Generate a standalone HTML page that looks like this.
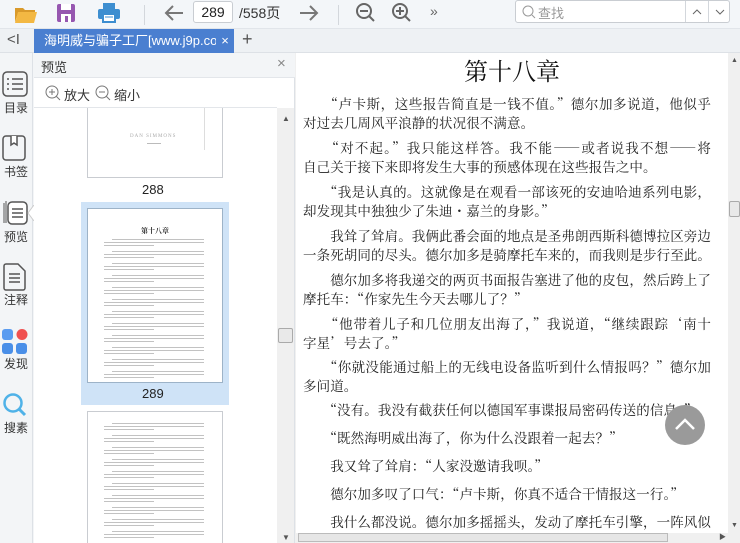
<!DOCTYPE html>
<html><head><meta charset="utf-8"><style>
*{margin:0;padding:0;box-sizing:border-box}
body{width:740px;height:543px;overflow:hidden;background:#f3f5f7;font-family:"Liberation Sans","Noto Sans CJK SC",sans-serif;position:relative;color:#333}
.a{position:absolute}
.tb{left:0;top:0;width:740px;height:29px;background:#f3f6f9;border-bottom:1px solid #e1e5ea}
.tabbar{left:0;top:29px;width:740px;height:24px;background:#eef1f4;border-bottom:1px solid #dde1e6}
.tab{left:34px;top:29px;width:200px;height:24px;background:#4a7fd0;color:#fff;font-size:13px;line-height:24px;padding-left:10px;white-space:nowrap;overflow:hidden}
.rail{left:0;top:53px;width:33px;height:490px;background:#f3f5f7;border-right:1px solid #dde1e6}
.rl{font-size:12px;color:#333;left:1px;width:30px;text-align:center}
.pv{left:34px;top:53px;width:261px;height:490px;background:#fff;border-right:1px solid #dde1e6}
.main{left:296px;top:53px;width:432px;height:480px;background:#fff}
.p{position:absolute;left:303px;width:408px;font-family:"Noto Serif CJK SC","Liberation Serif",serif;font-size:13.5px;letter-spacing:0.1px;line-height:19px;color:#222;font-feature-settings:"fwid" 1}
.p div{text-align:justify;text-align-last:justify;white-space:nowrap}
.p div.l{text-align-last:left}
.thumb{background:#fff;border:1px solid #c9ccd1}
.bar{position:absolute;height:1px;background:#9a9a9a}
</style></head><body>
<div class="a tb"></div>
<svg class="a" style="left:14px;top:4px" width="24" height="20"><path d="M1 4h8l2 2h10v3H4L1 18z" fill="#d99a2b"/><path d="M4 8h19l-3 11H1z" fill="#f3b843"/></svg>
<svg class="a" style="left:56px;top:3px" width="20" height="20"><rect x="1" y="1" width="18" height="18" rx="2" fill="#9657b0"/><rect x="5" y="1" width="10" height="6" fill="#fff"/><rect x="5" y="11" width="10" height="8" fill="#fff"/><rect x="9" y="13" width="3" height="6" fill="#9657b0"/></svg>
<svg class="a" style="left:97px;top:2px" width="24" height="22"><rect x="6" y="1" width="12" height="6" fill="#3d8ed0"/><rect x="1" y="7" width="22" height="10" rx="2" fill="#3d8ed0"/><rect x="6" y="12" width="12" height="8" fill="#fff" stroke="#3d8ed0" stroke-width="2"/><line x1="8" y1="15" x2="16" y2="15" stroke="#3d8ed0"/></svg>
<div class="a" style="left:144px;top:5px;width:1px;height:20px;background:#d3d7dc"></div>
<svg class="a" style="left:163px;top:3px" width="22" height="20"><path d="M20 10H3M10 3L3 10l7 7" stroke="#777" stroke-width="2" fill="none"/></svg>
<div class="a" style="left:193px;top:1px;width:40px;height:22px;border:1px solid #c9cdd2;border-radius:3px;background:#fff;font-size:14px;line-height:20px;text-align:center;color:#222">289</div>
<div class="a" style="left:239px;top:3px;font-size:14px;color:#333">/558页</div>
<svg class="a" style="left:298px;top:3px" width="22" height="20"><path d="M2 10h17M12 3l7 7-7 7" stroke="#777" stroke-width="2" fill="none"/></svg>
<div class="a" style="left:338px;top:5px;width:1px;height:20px;background:#d3d7dc"></div>
<svg class="a" style="left:355px;top:2px" width="22" height="22"><circle cx="9" cy="9" r="7" stroke="#666" stroke-width="2" fill="none"/><path d="M5 9h8M14 14l5 5" stroke="#666" stroke-width="2"/></svg>
<svg class="a" style="left:391px;top:2px" width="22" height="22"><circle cx="9" cy="9" r="7" stroke="#666" stroke-width="2" fill="none"/><path d="M5 9h8M9 5v8M14 14l5 5" stroke="#666" stroke-width="2"/></svg>
<div class="a" style="left:430px;top:3px;font-size:14px;color:#666">»</div>
<div class="a" style="left:515px;top:0px;width:215px;height:23px;border:1px solid #c9cdd2;border-radius:3px;background:#fff"></div>
<svg class="a" style="left:521px;top:4px" width="16" height="16"><circle cx="7" cy="7" r="5" stroke="#999" fill="none"/><path d="M11 11l3 3" stroke="#999"/></svg>
<div class="a" style="left:538px;top:3px;font-size:13px;color:#999">查找</div>
<div class="a" style="left:685px;top:1px;width:1px;height:21px;background:#d3d7dc"></div>
<div class="a" style="left:708px;top:1px;width:1px;height:21px;background:#d3d7dc"></div>
<svg class="a" style="left:691px;top:8px" width="12" height="8"><path d="M2 6l4-4 4 4" stroke="#666" fill="none"/></svg>
<svg class="a" style="left:714px;top:8px" width="12" height="8"><path d="M2 2l4 4 4-4" stroke="#666" fill="none"/></svg>

<div class="a tabbar"></div>
<div class="a" style="left:7px;top:31px;font-size:15px;color:#555">&lt;I</div>
<div class="a tab">海明威与骗子工厂[www.j9p.cor<span style="position:absolute;right:0;top:0;width:18px;background:#4a7fd0;text-align:center">×</span></div>
<div class="a" style="left:242px;top:29px;font-size:18px;color:#555">+</div>

<div class="a rail"></div>
<svg class="a" style="left:2px;top:71px" width="26" height="27"><rect x="1" y="1" width="24" height="24" rx="4" stroke="#555" stroke-width="1.5" fill="none"/><path d="M5 8h2M10 8h11M5 13h2M10 13h11M5 18h2M10 18h11" stroke="#555" stroke-width="1.5"/></svg>
<div class="a rl" style="top:99px">目录</div>
<svg class="a" style="left:2px;top:135px" width="26" height="27"><rect x="1" y="1" width="22" height="24" rx="3" stroke="#555" stroke-width="1.5" fill="none"/><path d="M9 1v9l3-2 3 2V1" stroke="#555" stroke-width="1.5" fill="#fff"/></svg>
<div class="a rl" style="top:163px">书签</div>
<svg class="a" style="left:2px;top:199px" width="28" height="27"><path d="M2 4v20M4 2v22" stroke="#555"/><rect x="6" y="3" width="19" height="22" rx="4" stroke="#555" stroke-width="1.5" fill="#fff"/><path d="M10 10h11M10 14h11M10 18h11" stroke="#555" stroke-width="1.5"/></svg>
<svg class="a" style="left:27px;top:205px" width="8" height="16"><path d="M7 0L1 8l6 8" fill="#fff" stroke="#ccc"/></svg>
<div class="a rl" style="top:228px">预览</div>
<svg class="a" style="left:3px;top:263px" width="24" height="28"><path d="M1 3a2 2 0 012-2h12l7 7v17a2 2 0 01-2 2H3a2 2 0 01-2-2z" stroke="#555" stroke-width="1.5" fill="none"/><path d="M6 11h11M6 15h11M6 19h11" stroke="#555" stroke-width="1.5"/></svg>
<div class="a rl" style="top:291px">注释</div>
<svg class="a" style="left:2px;top:329px" width="26" height="26"><rect x="0" y="0" width="11" height="11" rx="3" fill="#5b9cf0"/><circle cx="20" cy="5.5" r="5.5" fill="#f05050"/><rect x="0" y="14" width="11" height="11" rx="3" fill="#4a8fe8"/><rect x="14" y="14" width="11" height="11" rx="3" fill="#4a8fe8"/></svg>
<div class="a rl" style="top:355px">发现</div>
<svg class="a" style="left:2px;top:392px" width="26" height="26"><circle cx="11" cy="11" r="8.5" stroke="#4fb2e8" stroke-width="2.5" fill="none"/><path d="M17 17l6 6" stroke="#4fb2e8" stroke-width="3"/></svg>
<div class="a rl" style="top:419px">搜素</div>

<div class="a pv"></div>
<div class="a" style="left:34px;top:53px;width:261px;height:25px;background:#f3f5f7;border-bottom:1px solid #e3e6ea"></div>
<div class="a" style="left:41px;top:57px;font-size:13px;color:#333">预览</div>
<div class="a" style="left:277px;top:55px;font-size:15px;color:#888">×</div>
<svg class="a" style="left:45px;top:85px" width="16" height="16"><circle cx="7" cy="7" r="6" stroke="#777" fill="none"/><path d="M4 7h6M7 4v6M11 11l4 4" stroke="#777"/></svg>
<div class="a" style="left:64px;top:85px;font-size:13px;color:#333">放大</div>
<svg class="a" style="left:95px;top:85px" width="16" height="16"><circle cx="7" cy="7" r="6" stroke="#777" fill="none"/><path d="M4 7h6M11 11l4 4" stroke="#777"/></svg>
<div class="a" style="left:114px;top:85px;font-size:13px;color:#333">缩小</div>

<div class="a" style="left:34px;top:107px;width:243px;height:436px;background:#fff;border-top:1px solid #e3e6ea;overflow:hidden">
 <div class="a thumb" style="left:53px;top:-8px;width:136px;height:78px"></div>
 <div class="a" style="left:170px;top:0px;width:1px;height:42px;background:#ddd"></div>
 <div class="a" style="left:96px;top:26px;font-size:5px;color:#aaa;letter-spacing:1px;font-family:'Liberation Serif',serif">DAN SIMMONS</div>
 <div class="a" style="left:113px;top:35px;width:14px;height:1px;background:#bbb"></div>
 <div class="a" style="left:108px;top:74px;font-size:13px;color:#222">288</div>
 <div class="a" style="left:47px;top:94px;width:148px;height:203px;background:#cfe3f7"></div>
 <div class="a thumb" style="left:53px;top:100px;width:136px;height:175px;border-color:#9db3c8"></div>
 <div class="a" style="left:107px;top:118px;font-size:7px;font-weight:bold;color:#333;font-family:'Noto Serif CJK SC',serif">第十八章</div>
 <div class="a" style="left:108px;top:278px;font-size:13px;color:#222">289</div>
 <div class="a thumb" style="left:53px;top:303px;width:136px;height:140px"></div>
 <div id="bars"></div>
</div>
<div class="a" style="left:277px;top:108px;width:17px;height:435px;background:#f0f0f0"></div>
<div class="a" style="left:282px;top:114px;font-size:8px;color:#555">▲</div>
<div class="a" style="left:278px;top:328px;width:15px;height:15px;background:#e9e9e9;border:1px solid #aaa;border-radius:2px"></div>
<div class="a" style="left:282px;top:533px;font-size:8px;color:#555">▼</div>

<div class="a" style="left:295px;top:53px;width:445px;height:490px;background:#f0f0f0"></div>
<div class="a main"></div>
<div class="a" style="left:729px;top:53px;width:11px;height:480px;background:#f0f0f0"></div>
<div class="a" style="left:731px;top:57px;font-size:7px;color:#555">▲</div>
<div class="a" style="left:729px;top:201px;width:11px;height:16px;background:#e9e9e9;border:1px solid #aaa;border-radius:2px"></div>
<div class="a" style="left:731px;top:522px;font-size:7px;color:#555">▼</div>
<div class="a" style="left:296px;top:533px;width:433px;height:10px;background:#f0f0f0"></div>
<div class="a" style="left:298px;top:533px;width:370px;height:9px;background:#e6e6e6;border:1px solid #bbb"></div>
<div class="a" style="left:719px;top:532px;font-size:7px;color:#555">▶</div>

<div class="a" style="left:296px;top:55px;width:432px;text-align:center;font-family:'Noto Serif CJK SC',serif;font-size:24px;line-height:30px;color:#111">第十八章</div>

<div class="p" style="top:94px"><div>　　“卢卡斯，这些报告简直是一钱不值。”德尔加多说道，他似乎</div><div class="l">对过去几周风平浪静的状况很不满意。</div></div>
<div class="p" style="top:138px"><div>　　“对不起。”我只能这样答。我不能——或者说我不想——将</div><div class="l">自己关于接下来即将发生大事的预感体现在这些报告之中。</div></div>
<div class="p" style="top:182px"><div>　　“我是认真的。这就像是在观看一部该死的安迪哈迪系列电影，</div><div class="l">却发现其中独独少了朱迪·嘉兰的身影。”</div></div>
<div class="p" style="top:226px"><div>　　我耸了耸肩。我俩此番会面的地点是圣弗朗西斯科德博拉区旁边</div><div class="l">一条死胡同的尽头。德尔加多是骑摩托车来的，而我则是步行至此。</div></div>
<div class="p" style="top:270px"><div>　　德尔加多将我递交的两页书面报告塞进了他的皮包，然后跨上了</div><div class="l">摩托车：“作家先生今天去哪儿了？”</div></div>
<div class="p" style="top:314px"><div>　　“他带着儿子和几位朋友出海了，”我说道，“继续跟踪‘南十</div><div class="l">字星’号去了。”</div></div>
<div class="p" style="top:357px"><div>　　“你就没能通过船上的无线电设备监听到什么情报吗？”德尔加</div><div class="l">多问道。</div></div>
<div class="p" style="top:400px"><div class="l">　　“没有。我没有截获任何以德国军事谍报局密码传送的信息。”</div></div>
<div class="p" style="top:428px"><div class="l">　　“既然海明威出海了，你为什么没跟着一起去？”</div></div>
<div class="p" style="top:456px"><div class="l">　　我又耸了耸肩：“人家没邀请我呗。”</div></div>
<div class="p" style="top:484px"><div class="l">　　德尔加多叹了口气：“卢卡斯，你真不适合干情报这一行。”</div></div>
<div class="p" style="top:512px"><div>　　我什么都没说。德尔加多摇摇头，发动了摩托车引擎，一阵风似</div></div>

<div class="a" style="left:665px;top:405px;width:40px;height:40px;border-radius:50%;background:#9a9a9a"></div>
<svg class="a" style="left:673px;top:414px" width="24" height="20"><path d="M3 15l9-9 9 9" stroke="#fff" stroke-width="2.5" fill="none"/></svg>

<script>
var h='';
var y=131;for(var i=0;i<36;i++){var first=(i%3==0);h+='<div class="bar" style="left:'+(first?78:70)+'px;top:'+y+'px;width:'+(i%3==2?50:(first?92:100))+'px;opacity:.6"></div>';y+=(i%3==2)?6:3;}
y=315;for(var i=0;i<30;i++){var first=(i%3==0);h+='<div class="bar" style="left:'+(first?78:70)+'px;top:'+y+'px;width:'+(i%3==2?50:(first?92:100))+'px;opacity:.6"></div>';y+=(i%3==2)?6:3;}
document.getElementById('bars').innerHTML=h;
</script>
</body></html>
